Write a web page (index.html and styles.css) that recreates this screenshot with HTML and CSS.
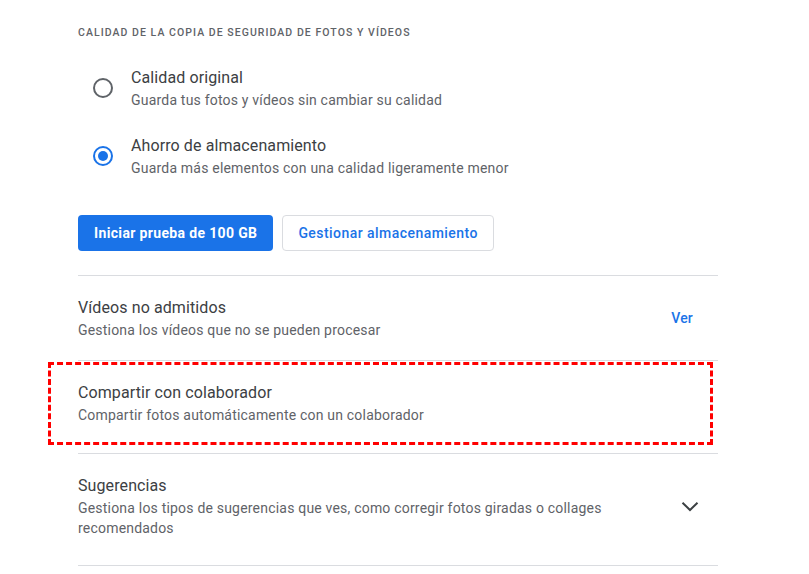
FILE: index.html
```html
<!DOCTYPE html>
<html lang="es">
<head>
    <meta charset="UTF-8">
    <meta name="viewport" content="width=device-width, initial-scale=1.0">
    <title>Configuración de Google Fotos</title>
    <link rel="stylesheet" href="styles.css">
</head>
<body>
    <div class="settings">
        <h2 class="section-title">Calidad de la copia de seguridad de fotos y vídeos</h2>

        <div class="radio-group">
            <label class="radio-option">
                <span class="radio"></span>
                <span class="option-text">
                    <span class="title">Calidad original</span>
                    <span class="subtitle">Guarda tus fotos y vídeos sin cambiar su calidad</span>
                </span>
            </label>
            <label class="radio-option">
                <span class="radio checked"></span>
                <span class="option-text">
                    <span class="title">Ahorro de almacenamiento</span>
                    <span class="subtitle">Guarda más elementos con una calidad ligeramente menor</span>
                </span>
            </label>
        </div>

        <div class="actions">
            <button class="btn btn-primary">Iniciar prueba de 100 GB</button>
            <button class="btn btn-outline">Gestionar almacenamiento</button>
        </div>

        <div class="list">
            <div class="item item-short">
                <div class="item-text">
                    <div class="title">Vídeos no admitidos</div>
                    <div class="subtitle">Gestiona los vídeos que no se pueden procesar</div>
                </div>
                <button class="link-btn">Ver</button>
            </div>
            <div class="item highlighted">
                <div class="item-text">
                    <div class="title">Compartir con colaborador</div>
                    <div class="subtitle">Compartir fotos automáticamente con un colaborador</div>
                </div>
            </div>
            <div class="item">
                <div class="item-text">
                    <div class="title">Sugerencias</div>
                    <div class="subtitle">Gestiona los tipos de sugerencias que ves, como corregir fotos giradas o collages recomendados</div>
                </div>
                <svg class="chevron" width="24" height="24" viewBox="0 0 24 24">
                    <polyline points="4.5,8.8 12,16 19.5,8.8" fill="none" stroke="#3c4043" stroke-width="2"/>
                </svg>
            </div>
        </div>
    </div>
</body>
</html>
```

FILE: styles.css
```css
body {
    margin: 0;
    background: #fff;
    font-family: Roboto, 'Liberation Sans', Arial, sans-serif;
    color: #3c4043;
}
.settings {
    width: 640px;
    padding: 25px 0 0 78px;
}
.section-title {
    margin: 0;
    font-size: 10.5px;
    line-height: 16px;
    font-weight: 500;
    letter-spacing: 1.05px;
    text-transform: uppercase;
    color: #5f6368;
}
.title {
    display: block;
    font-size: 16px;
    line-height: 24px;
    letter-spacing: 0.1px;
    color: #3c4043;
}
.subtitle {
    display: block;
    font-size: 14px;
    line-height: 20px;
    letter-spacing: 0.2px;
    color: #5f6368;
}
.radio-group {
    display: flex;
    flex-direction: column;
    gap: 24px;
    margin-top: 25px;
    padding-left: 15px;
}
.radio-option {
    display: flex;
    align-items: center;
    gap: 18px;
}
.radio {
    width: 16px;
    height: 16px;
    border: 2px solid #5f6368;
    border-radius: 50%;
    position: relative;
    flex: none;
}
.radio.checked {
    border-color: #1a73e8;
}
.radio.checked::after {
    content: "";
    position: absolute;
    top: 3px;
    left: 3px;
    width: 10px;
    height: 10px;
    border-radius: 50%;
    background: #1a73e8;
}
.option-text {
    display: flex;
    flex-direction: column;
}
.actions {
    display: flex;
    gap: 9px;
    margin-top: 37px;
    margin-bottom: 24px;
}
.btn {
    height: 36px;
    padding: 0 16px;
    border-radius: 4px;
    font-family: Roboto, 'Liberation Sans', Arial, sans-serif;
    font-size: 14px;
    cursor: pointer;
}
.btn-primary {
    background: #1a73e8;
    color: #fff;
    border: none;
    font-weight: 700;
    letter-spacing: 0.35px;
}
.btn-outline {
    background: #fff;
    color: #1a73e8;
    border: 1px solid #dadce0;
    font-weight: 500;
    letter-spacing: 0.45px;
    padding: 0 15px;
}
.list {
    border-top: 1px solid #dadce0;
}
.item {
    display: flex;
    align-items: center;
    padding: 20px 0 27px;
    border-bottom: 1px solid #dadce0;
    position: relative;
}
.item-short {
    padding-bottom: 20px;
}
.item-text {
    flex: 1;
    max-width: 570px;
}
.link-btn {
    margin-left: auto;
    margin-right: 17px;
    padding: 8px 8px;
    border: none;
    background: none;
    color: #1a73e8;
    font-family: Roboto, 'Liberation Sans', Arial, sans-serif;
    font-size: 14px;
    font-weight: 500;
    letter-spacing: 0.2px;
    cursor: pointer;
}
.chevron {
    margin-left: auto;
    margin-right: 16px;
    flex: none;
}
.highlighted {
    padding-bottom: 28px;
}
/* red annotation frame over the highlighted row */
.highlighted::after {
    content: "";
    position: absolute;
    top: 1px;
    left: -30px;
    right: 5px;
    bottom: 8px;
    border: 3px dashed #ff0000;
    pointer-events: none;
}
```
